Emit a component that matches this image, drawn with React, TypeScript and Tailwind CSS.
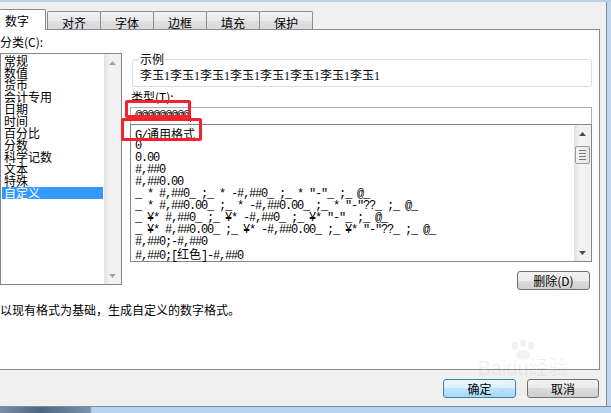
import React from "react";

const CATEGORIES = ["常规", "数值", "货币", "会计专用", "日期", "时间", "百分比", "分数", "科学记数", "文本", "特殊", "自定义"];

const FORMATS = [
  "G/通用格式",
  "0",
  "0.00",
  "#,##0",
  "#,##0.00",
  '_ * #,##0_ ;_ * -#,##0_ ;_ * "-"_ ;_ @_',
  '_ * #,##0.00_ ;_ * -#,##0.00_ ;_ * "-"??_ ;_ @_',
  '_ ¥* #,##0_ ;_ ¥* -#,##0_ ;_ ¥* "-"_ ;_ @_',
  '_ ¥* #,##0.00_ ;_ ¥* -#,##0.00_ ;_ ¥* "-"??_ ;_ @_',
  "#,##0;-#,##0",
  "#,##0;[红色]-#,##0",
];

const TABS = ["对齐", "字体", "边框", "填充", "保护"];

const cjk = "font-['Noto_Sans_CJK_SC','Noto_Sans',sans-serif]";

const Arrow = ({ up, color }: { up?: boolean; color: string }) => (
  <svg width="7" height="4" viewBox="0 0 7 4">
    <path d={up ? "M0 4 L3.5 0 L7 4Z" : "M0 0 L3.5 4 L7 0Z"} fill={color} />
  </svg>
);

const ScrollBar = ({ disabled }: { disabled?: boolean }) => (
  <div className="w-[17px] h-full flex flex-col items-center bg-[linear-gradient(to_right,#e2e2e2,#f3f3f3_35%,#f0f0f0)]">
    <div className="h-[17px] w-full flex items-center justify-center">
      <Arrow up color={disabled ? "#a3a3a3" : "#4a4a4a"} />
    </div>
    {!disabled && (
      <div className="mt-[4px] w-[15px] h-[18px] rounded-[2px] border border-[#9a9a9a] bg-[linear-gradient(to_right,#f4f4f4,#e6e6e6)] flex flex-col items-center justify-center gap-[2px]">
        <div className="w-[7px] h-px bg-[#7a7a7a]" />
        <div className="w-[7px] h-px bg-[#7a7a7a]" />
        <div className="w-[7px] h-px bg-[#7a7a7a]" />
        <div className="w-[7px] h-px bg-[#7a7a7a]" />
      </div>
    )}
    <div className="flex-1" />
    <div className="h-[17px] w-full flex items-center justify-center">
      <Arrow color={disabled ? "#a3a3a3" : "#4a4a4a"} />
    </div>
  </div>
);

const FormatText = ({ text }: { text: string }) => (
  <>
    {text.split(/([\u4e00-\u9fff]+)/).map((part, i) =>
      /[\u4e00-\u9fff]/.test(part) ? (
        <span key={i} className={`${cjk} text-[12px] tracking-normal`}>
          {part}
        </span>
      ) : (
        <span key={i}>{part}</span>
      )
    )}
  </>
);

const Button = ({ label, primary, className }: { label: string; primary?: boolean; className: string }) => (
  <button
    className={`${className} h-[19px] rounded-[3px] border text-[12px] leading-[12px] text-black flex items-center justify-center ${
      primary
        ? "border-[#3c7fb1] bg-[linear-gradient(#eaf6fd_0%,#d9f0fc_50%,#bee6fd_50%,#a7d9f5_100%)]"
        : "border-[#707070] bg-[linear-gradient(#f2f2f2_0%,#ebebeb_50%,#dddddd_50%,#cfcfcf_100%)]"
    }`}
  >
    {label}
  </button>
);

export default function App() {
  return (
    <div className={`${cjk} relative w-[611px] h-[413px] overflow-hidden bg-[#f0f0f0] flex flex-col text-[12px] leading-[12px] text-black`}>
      <div className="h-[2px] bg-[#bccfe3]" />

      <div className="flex h-[404px]">
        <div className="w-[606px] flex flex-col">
          {/* tabs */}
          <div className="h-[27px] flex items-end">
            <div className="relative z-10 w-[46px] h-[21px] -mb-px bg-white border-t border-r border-[#898c95] rounded-tr-[2px] pt-[5px] pl-[5px]">
              数字
            </div>
            {TABS.map((tab, i) => (
              <div
                key={tab}
                className={`${i === 0 ? "ml-[1px]" : "-ml-px"} w-[54px] h-[18px] border border-b-0 border-[#898c95] rounded-t-[2px] bg-[linear-gradient(#f3f3f3,#e9e9e9_50%,#e0e0e0_51%,#d9d9d9)] pt-[5px] text-center`}
              >
                {tab}
              </div>
            ))}
          </div>

          {/* panel */}
          <div className="w-[600px] h-[341px] bg-white border-t border-r border-b border-[#898c95] flex flex-col">
            <div className="flex items-start">
              <div className="w-[122px] pt-[6px] flex flex-col">
                <div className="h-[12px]">分类(C):</div>
                <div className="mt-[5px] h-[232px] border border-[#828790] flex">
                  <ul className="flex-1 p-[1px]">
                    {CATEGORIES.map((c) => (
                      <li
                        key={c}
                        className={`h-[12px] leading-[12px] pl-[2px] ${c === "自定义" ? "bg-[#3399ff] text-white" : ""}`}
                      >
                        {c}
                      </li>
                    ))}
                  </ul>
                  <ScrollBar disabled />
                </div>
              </div>

              <div className="ml-[8px] w-[462px] flex flex-col">
                <div className="mt-[29px] ml-[2px] w-[460px] h-[28px] border border-[#d5dfe5] rounded-[3px]">
                  <div className="-mt-[7px] ml-[6px] px-[1px] w-fit h-[12px] bg-white">示例</div>
                  <div className="mt-[5px] pl-[7px] h-[12px] font-['Liberation_Serif','Noto_Sans_CJK_SC',serif]">
                    李玉1李玉1李玉1李玉1李玉1李玉1李玉1李玉1
                  </div>
                </div>

                <div className="mt-[4px] pl-[1px] h-[12px]">类型(T):</div>

                <div className="mt-[4px] h-[17px] border border-b-0 border-[#abadb3] pl-[4px] pt-[2px] flex items-start font-['Liberation_Mono',monospace] text-[12px] leading-[12px] tracking-[-1.2px]">
                  <span>@@@@@@@@@</span>
                  <span className="inline-block ml-[1px] w-px h-[13px] -mt-px bg-black" />
                </div>

                <div className="h-[138px] border border-[#828790] flex">
                  <ul className="flex-1 pt-[3px] pl-[4px] font-['Liberation_Mono','Noto_Sans_CJK_SC',monospace] text-[12px] tracking-[-1.2px]">
                    {FORMATS.map((f) => (
                      <li key={f} className="h-[12px] leading-[12px] whitespace-pre">
                        <FormatText text={f} />
                      </li>
                    ))}
                  </ul>
                  <ScrollBar />
                </div>

                <Button label="删除(D)" className="mt-[9px] self-end mr-[2px] w-[73px]" />
              </div>
            </div>

            <p className="mt-[14px] h-[12px]">以现有格式为基础，生成自定义的数字格式。</p>
          </div>

          {/* bottom buttons */}
          <div className="flex-1 flex justify-end items-start pt-[9px] pr-[7px] gap-[11px]">
            <Button label="确定" primary className="w-[73px]" />
            <Button label="取消" className="w-[72px]" />
          </div>
        </div>

        <div className="w-[5px] border-l border-[#7d8da0] bg-[#c2d7ee]" />
      </div>

      <div className="h-[7px] border-t border-[#7d8da0] bg-[linear-gradient(to_right,#7b8fa6_0px,#4e6580_40px,#7d93ab_90px,#b7d3f1_92px,#b7d3f1)]" />

      {/* red annotation boxes */}
      <div className="absolute left-[125px] top-[100px] w-[66px] h-[18px] border-[3px] border-[#f5222d] rounded-[2px]" />
      <div className="absolute left-[121px] top-[118px] w-[81px] h-[23px] border-[3px] border-[#f5222d] rounded-[2px]" />

      {/* watermark */}
      <div className="absolute left-[468px] top-[338px] w-[110px] flex flex-col items-center text-black/[0.06] pointer-events-none">
        <svg width="30" height="22" viewBox="0 0 30 22" className="-mb-[2px]">
          <ellipse cx="7" cy="8" rx="3" ry="4" fill="rgba(0,0,0,0.05)" />
          <ellipse cx="15" cy="5" rx="3" ry="4" fill="rgba(0,0,0,0.05)" />
          <ellipse cx="23" cy="8" rx="3" ry="4" fill="rgba(0,0,0,0.05)" />
          <ellipse cx="15" cy="17" rx="7" ry="5" fill="rgba(0,0,0,0.05)" />
        </svg>
        <div className="font-['Liberation_Sans','Noto_Sans_CJK_SC',sans-serif] text-[20px] leading-[20px] whitespace-nowrap">
          Baidu经验
        </div>
        <div className="mt-[6px] font-['Liberation_Sans',sans-serif] text-[13px] leading-[13px] whitespace-nowrap">
          jingyan.baidu.com
        </div>
      </div>
    </div>
  );
}
